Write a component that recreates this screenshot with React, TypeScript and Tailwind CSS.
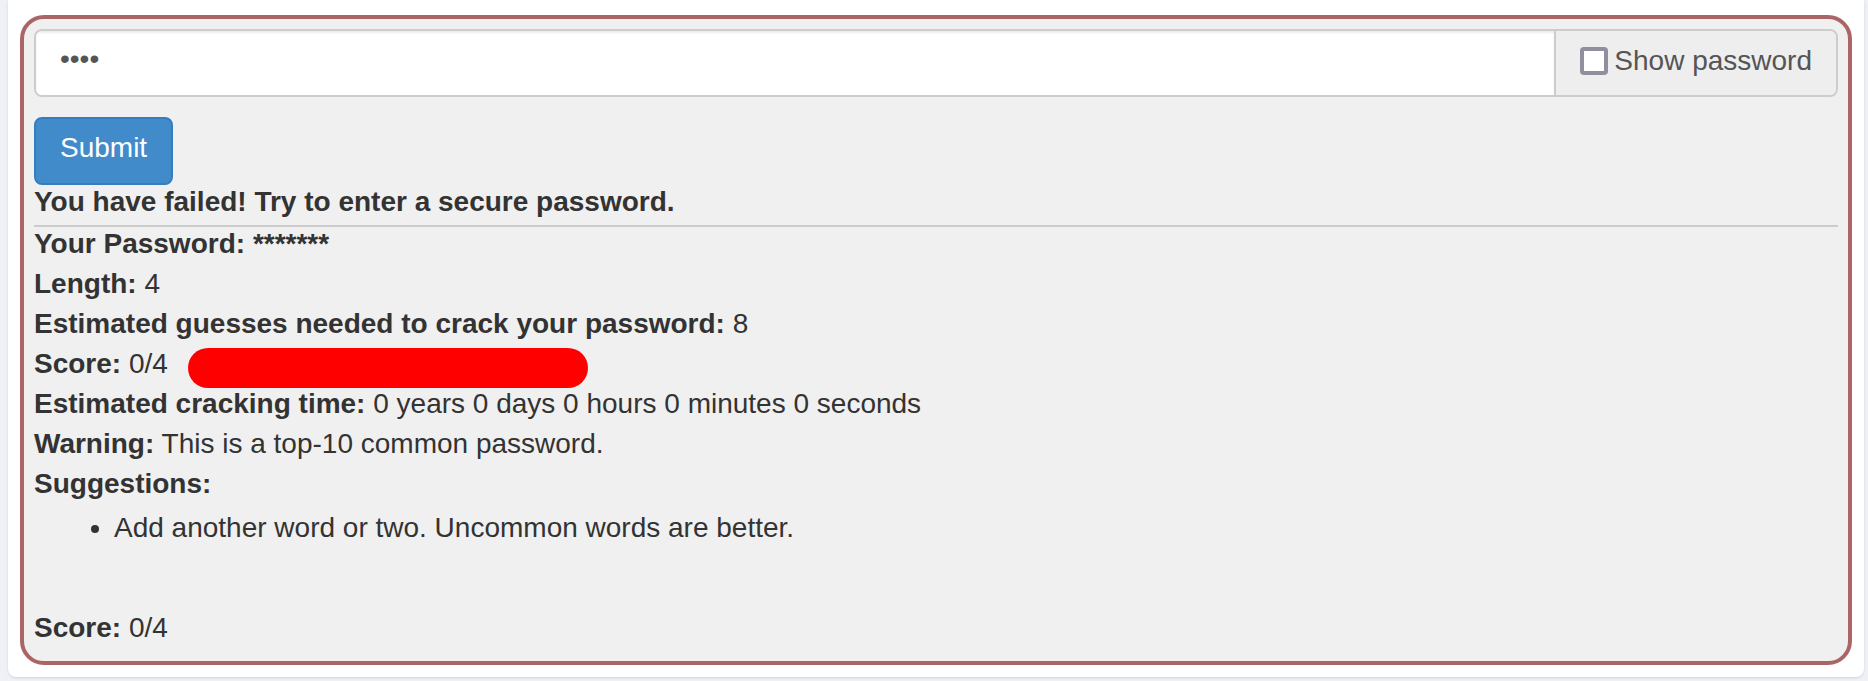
import React, { useState } from "react";

function Row({ label, children }: { label: string; children?: React.ReactNode }) {
  return (
    <div>
      <b>{label}</b> {children}
    </div>
  );
}

export default function App() {
  const [shown, setShown] = useState(false);

  return (
    <div className="min-h-screen bg-[#f0f0f7] pr-1 pb-1 pl-2 font-['Liberation_Sans',Arial,sans-serif] text-[28px] leading-[40px] text-[#333]">
      <main className="rounded-b-lg bg-white px-3 pt-[15px] pb-3 shadow-sm">
        <section className="rounded-[24px] border-4 border-[#a66] bg-[#f0f0f0] px-[10px] pt-[10px] pb-[13px]">
          <form onSubmit={(e) => e.preventDefault()}>
            <div className="flex h-[68px] overflow-hidden rounded-lg border-2 border-[#ccc]">
              <input
                type={shown ? "text" : "password"}
                aria-label="Password"
                defaultValue="pass"
                className="min-w-0 flex-1 bg-white px-6 pb-2 text-[#555] shadow-[inset_0_2px_2px_rgba(0,0,0,0.075)] outline-none"
              />
              <label className="flex items-center gap-1.5 border-l-2 border-[#ccc] bg-[#eee] px-6 pb-1 text-[#555]">
                <input
                  type="checkbox"
                  checked={shown}
                  onChange={(e) => setShown(e.target.checked)}
                  className="size-7 appearance-none rounded-sm border-4 border-[#8f8f9d] bg-white checked:bg-[#428bca]"
                />
                Show password
              </label>
            </div>
            <button
              type="submit"
              className="mt-5 block h-[68px] rounded-lg border-2 border-[#357ebd] bg-[#428bca] px-6 pb-1.5 text-white"
            >
              Submit
            </button>
          </form>
          <h2 className="border-b-2 border-[#ccc] pb-1.5 leading-[34px] font-bold">
            You have failed! Try to enter a secure password.
          </h2>
          <div className="-mt-[3px]">
            <Row label="Your Password:">
              <b>*******</b>
            </Row>
            <Row label="Length:">4</Row>
            <Row label="Estimated guesses needed to crack your password:">8</Row>
            <div className="flex items-start">
              <Row label="Score:">0/4</Row>
              <div className="mt-1 -mb-1 ml-5 h-10 w-[400px] rounded-full bg-[#f00]" />
            </div>
            <Row label="Estimated cracking time:">0 years 0 days 0 hours 0 minutes 0 seconds</Row>
            <Row label="Warning:">This is a top-10 common password.</Row>
            <Row label="Suggestions:" />
            <ul className="mt-1 mb-[60px] list-disc pl-20">
              <li>Add another word or two. Uncommon words are better.</li>
            </ul>
            <Row label="Score:">0/4</Row>
          </div>
        </section>
      </main>
    </div>
  );
}
